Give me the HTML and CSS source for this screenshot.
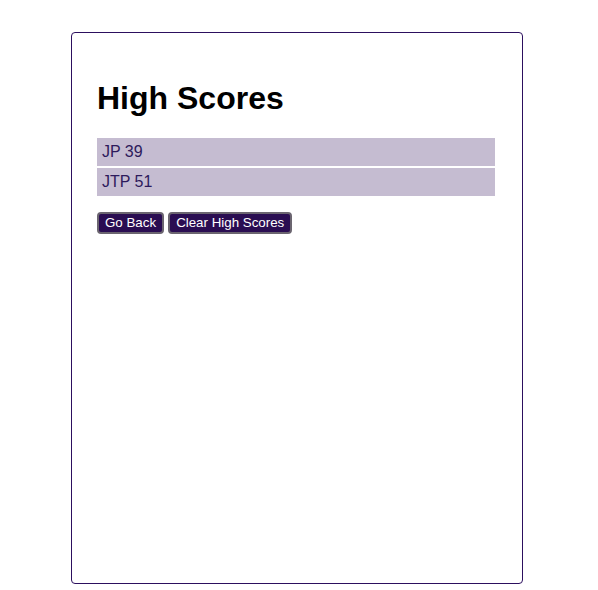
FILE: index.html
```html
<!DOCTYPE html>
<html>
<head>
<meta charset="utf-8">
<link rel="stylesheet" href="styles.css">
</head>
<body>
<div class="card">
  <h1 class="title">High Scores</h1>
  <ol class="scores">
    <li class="score">JP 39</li>
    <li class="score">JTP 51</li>
  </ol>
  <div class="actions">
    <button class="btn">Go Back</button>
    <button class="btn">Clear High Scores</button>
  </div>
</div>
</body>
</html>
```

FILE: styles.css
```css
html, body {
  margin: 0;
  padding: 0;
  background: #ffffff;
  font-family: "Liberation Sans", Arial, sans-serif;
}
.card {
  box-sizing: border-box;
  width: 452px;
  height: 552px;
  margin: 32px 0 0 71px;
  border: 1px solid #2c0f5e;
  border-radius: 4px;
  padding: 26px 27px 25px 25px;
}
.title {
  font-size: 32px;
  font-weight: bold;
  margin: 21px 0 21px 0;
  color: #000;
}
.scores {
  list-style: none;
  margin: 0;
  padding: 0;
  display: flex;
  flex-direction: column;
  gap: 2px;
}
.score {
  background: #c5bcd1;
  color: #2d1a5c;
  font-size: 16px;
  height: 28px;
  line-height: 28px;
  padding-left: 5px;
}
.actions {
  display: flex;
  gap: 4px;
  margin-top: 16px;
}
.btn {
  font-family: "Liberation Sans", Arial, sans-serif;
  font-size: 13.33px;
  color: #fff;
  background: #2a0d52;
  border: 2px solid #6b6570;
  border-radius: 4px;
  height: 22px;
  padding: 0 6px;
  line-height: 16px;
}
```
